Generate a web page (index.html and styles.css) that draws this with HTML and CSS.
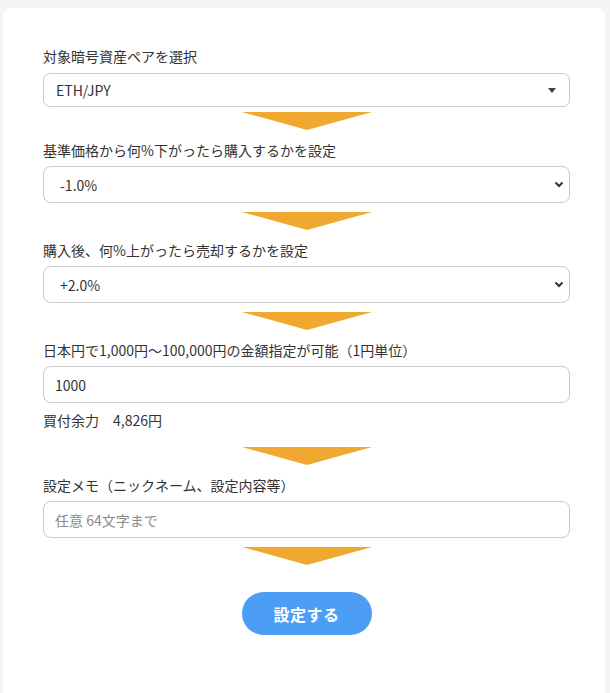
FILE: index.html
```html
<!DOCTYPE html>
<html lang="ja">
<head>
<meta charset="utf-8">
<title>自動売買設定</title>
<link rel="stylesheet" href="styles.css">
</head>
<body>
<div class="card">
  <form class="form">
    <div class="field">
      <label class="label">対象暗号資産ペアを選択</label>
      <div class="pair-select">
        <span class="pair-value">ETH/JPY</span>
        <svg class="caret" width="8" height="5" viewBox="0 0 8 5"><path d="M0 0H8L4 5Z" fill="#444"/></svg>
      </div>
    </div>
    <div class="arrow arrow-first"></div>

    <div class="field">
      <label class="label">基準価格から何%下がったら購入するかを設定</label>
      <div class="select-wrap">
        <select class="control select"><option>-1.0%</option></select>
        <svg class="chevron" width="10" height="7" viewBox="0 0 10 7"><path d="M1.5 1.5L5 5L8.5 1.5" fill="none" stroke="#333" stroke-width="2"/></svg>
      </div>
    </div>
    <div class="arrow"></div>

    <div class="field">
      <label class="label">購入後、何%上がったら売却するかを設定</label>
      <div class="select-wrap">
        <select class="control select"><option>+2.0%</option></select>
        <svg class="chevron" width="10" height="7" viewBox="0 0 10 7"><path d="M1.5 1.5L5 5L8.5 1.5" fill="none" stroke="#333" stroke-width="2"/></svg>
      </div>
    </div>
    <div class="arrow"></div>

    <div class="field">
      <label class="label">日本円で1,000円～100,000円の金額指定が可能（1円単位）</label>
      <input class="control input" type="text" value="1000">
    </div>
    <p class="balance">買付余力　4,826円</p>
    <div class="arrow arrow-after-balance"></div>

    <div class="field">
      <label class="label">設定メモ（ニックネーム、設定内容等）</label>
      <input class="control input" type="text" placeholder="任意 64文字まで">
    </div>
    <div class="arrow arrow-last"></div>

    <button class="submit" type="button">設定する</button>
  </form>
</div>
</body>
</html>
```

FILE: styles.css
```css
* { box-sizing: border-box; }

html, body {
  margin: 0;
  padding: 0;
  background: #f4f4f4;
  overflow: hidden;
}

body {
  font-family: "Noto Sans CJK JP", "Noto Sans", sans-serif;
  font-size: 14px;
  color: #333;
}

.card {
  margin: 8px 5px 0 3px;
  min-height: 685px;
  background: #fff;
  border-radius: 8px 8px 0 0;
  padding: 38px 35px 0 40px;
}

.form {
  display: flex;
  flex-direction: column;
}

.field {
  display: flex;
  flex-direction: column;
  gap: 6px;
}

.label {
  display: block;
  line-height: 20px;
  font-size: 14px;
  color: #333;
}

.pair-select {
  margin-top: 1px;
  height: 34px;
  border: 1px solid #c9c9c9;
  border-radius: 7px;
  display: flex;
  align-items: center;
  justify-content: space-between;
  padding: 0 13px 0 12px;
  font-size: 14px;
  color: #333;
}

.caret { display: block; }

.select-wrap {
  position: relative;
}

.control {
  display: block;
  width: 100%;
  height: 37px;
  border: 1px solid #c9c9c9;
  border-radius: 8px;
  background: #fff;
  font-family: inherit;
  font-size: 14px;
  color: #333;
  margin: 0;
  outline: none;
}

.select {
  appearance: none;
  -webkit-appearance: none;
  padding: 0 30px 0 16px;
}

.chevron {
  position: absolute;
  right: 6px;
  top: 15px;
}

.input {
  padding: 0 11px;
}

.input::placeholder {
  color: #8a8a8a;
}

.arrow {
  align-self: center;
  width: 0;
  height: 0;
  border-left: 65px solid transparent;
  border-right: 65px solid transparent;
  border-top: 18px solid #f0a830;
  margin: 9px 0 10px;
}

.arrow-first { margin-top: 5px; }
.arrow-after-balance { margin-top: 17px; }
.arrow-last { margin-bottom: 0; }

.balance {
  margin: 7px 0 0;
  line-height: 20px;
  font-size: 14px;
  color: #333;
}

.submit {
  align-self: center;
  margin-top: 27px;
  width: 130px;
  height: 43px;
  border: none;
  border-radius: 22px;
  background: #4b9ef4;
  color: #fff;
  font-family: inherit;
  font-size: 16px;
  font-weight: 700;
  letter-spacing: 0.5px;
}
```
